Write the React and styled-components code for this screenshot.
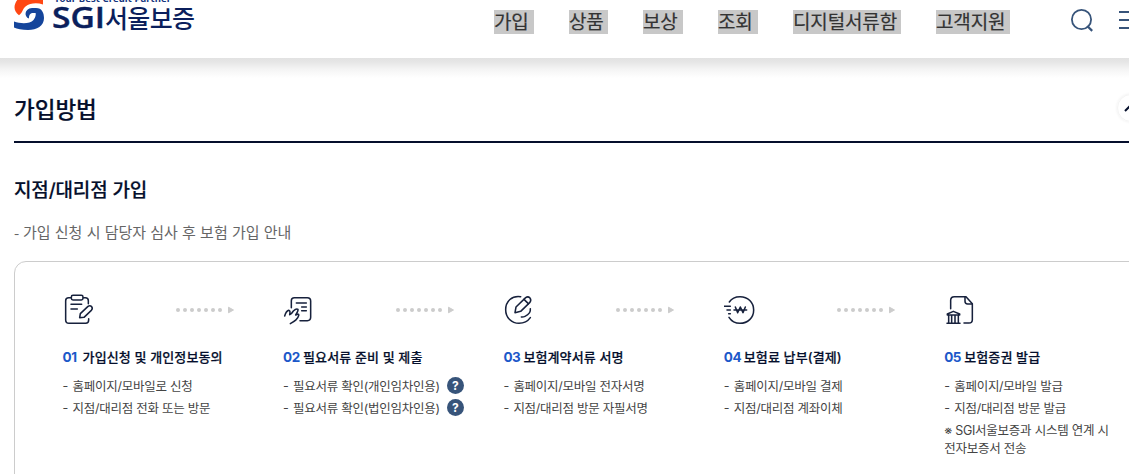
import React from 'react'
import styled, { createGlobalStyle } from 'styled-components'

const steps = [
  {
    no: '01',
    title: '가입신청 및 개인정보동의',
    icon: ClipboardIcon,
    items: [{ text: '홈페이지/모바일로 신청' }, { text: '지점/대리점 전화 또는 방문' }],
  },
  {
    no: '02',
    title: '필요서류 준비 및 제출',
    icon: SubmitIcon,
    items: [
      { text: '필요서류 확인(개인임차인용)', help: true },
      { text: '필요서류 확인(법인임차인용)', help: true },
    ],
  },
  {
    no: '03',
    title: '보험계약서류 서명',
    icon: SignIcon,
    items: [{ text: '홈페이지/모바일 전자서명' }, { text: '지점/대리점 방문 자필서명' }],
  },
  {
    no: '04',
    title: '보험료 납부(결제)',
    icon: PayIcon,
    items: [{ text: '홈페이지/모바일 결제' }, { text: '지점/대리점 계좌이체' }],
  },
  {
    no: '05',
    title: '보험증권 발급',
    icon: PolicyIcon,
    items: [{ text: '홈페이지/모바일 발급' }, { text: '지점/대리점 방문 발급' }],
    note: ['※ SGI서울보증과 시스템 연계 시', '전자보증서 전송'],
  },
]

const menus = [
  { label: '가입', width: 40 },
  { label: '상품', width: 39 },
  { label: '보상', width: 40 },
  { label: '조회', width: 40 },
  { label: '디지털서류함', width: 108 },
  { label: '고객지원', width: 74 },
]

function App() {
  return (
    <Page>
      <GlobalStyle />
      <Header>
        <Logo />
        <Nav>
          {menus.map((menu) => (
            <NavItem key={menu.label} $width={menu.width}>{menu.label}</NavItem>
          ))}
        </Nav>
        <Tools>
          <svg width="24" height="24" viewBox="0 0 24 24" fill="none" stroke="#37547a" strokeWidth="1.8">
            <circle cx="11.500" cy="10.5" r="9.6" />
            <path d="M17.2 17L22.2 21.9" strokeWidth="2.2" />
          </svg>
          <MenuButton>
            <span />
            <span />
            <span />
          </MenuButton>
        </Tools>
      </Header>
      <Shade />
      <Content>
        <TitleBar>
          <h2>가입방법</h2>
          <FoldButton>
            <svg width="14" height="8" viewBox="0 0 14 8" fill="none" stroke="#050f2c" strokeWidth="2">
              <path d="M1 7L7 1L13 7" />
            </svg>
          </FoldButton>
        </TitleBar>
        <SubTitle>지점/대리점 가입</SubTitle>
        <Desc><Dash>-</Dash>가입 신청 시 담당자 심사 후 보험 가입 안내</Desc>
        <Steps>
          {steps.map((step, i) => (
            <Step key={step.no}>
              <StepTop>
                <step.icon />
                {i < steps.length - 1 && <Arrow />}
              </StepTop>
              <StepTitle><em>{step.no}</em>{step.title}</StepTitle>
              {step.items.map((item) => (
                <StepItem key={item.text}>
                  <i>-</i>
                  {item.text}
                  {item.help && <Help>?</Help>}
                </StepItem>
              ))}
              {step.note && (
                <Note>
                  {step.note.map((line) => <div key={line}>{line}</div>)}
                </Note>
              )}
            </Step>
          ))}
        </Steps>
      </Content>
    </Page>
  )
}

export default App

function Logo() {
  return (
    <LogoSvg width="184" height="34" viewBox="0 0 184 34">
      <path fill="#ff4713" d="M5 15.3C-1 11 -1 4 5 -2H29V4.500C23 2.500 16 3 11.500 6.500C8.500 9 8.500 13 5 15.300Z" />
      <path fill="#15459b" d="M15 18.500C10 17 10 8.500 18 8H22C28 8 30 13 30 18C30 26 23 30 14 30C8 30 3 29 0 27.500V21.500C7 24 16 24 19.500 20C22 17 22 13 21.500 13H18C15 14 15 16.500 15 18.500Z" />
      <g fill="#0b1f5c" fontFamily="'Noto Sans','Noto Sans CJK KR',sans-serif">
        <text x="40" y="2" fontSize="9.500" fontWeight="700" fill="#15367f" textLength="117">Your Best Credit Partner</text>
        <text x="38" y="28" fontSize="29" fontWeight="600" stroke="#0b1f5c" strokeWidth="0.4" fontFamily="'Open Sans',sans-serif" textLength="53" lengthAdjust="spacingAndGlyphs">SGI</text>
        <text x="91" y="27.500" fontSize="25" fontWeight="500" fontFamily="'Noto Sans CJK KR',sans-serif" textLength="90">서울보증</text>
      </g>
    </LogoSvg>
  )
}

function Arrow() {
  return (
    <svg width="58" height="8" viewBox="0 0 58 8" fill="#ccc">
      {[0, 1, 2, 3, 4, 5, 6].map((n) => <circle key={n} cx={2 + n * 7} cy="4" r="2" />)}
      <path d="M52.500 1.200L57.500 4L52.500 6.800Z" stroke="#ccc" strokeLinejoin="round" />
    </svg>
  )
}

function ClipboardIcon() {
  return (
    <Icon viewBox="39 27 96 96">
      <path d="M62 38H56Q47 38 47 47V105Q47 115 57 115H107Q116 115 116 105V101" />
      <path d="M100 38H106Q115 38 115 47V56" />
      <rect x="64" y="31" width="35" height="14" rx="5" />
      <path d="M63 58H95M63 72H82" />
      <path d="M89 98L91 86L114 64Q120 60 125 65Q129 70 124 76L102 97Z" />
    </Icon>
  )
}

function SubmitIcon() {
  return (
    <Icon viewBox="39 27 96 96">
      <path d="M64 68V47Q64 38 73 38H112Q122 38 122 48V97Q122 107 112 107H90" />
      <path d="M79 54H109M95 66H109M95 77H109" />
      <path d="M44 93Q48 79 56 76Q62 76 59 89Q64 88 70 78Q79 69 84 73Q85 77 77 90Q88 84 86 92C83 104 74 109 61 116" />
    </Icon>
  )
}

function SignIcon() {
  return (
    <Icon viewBox="39 27 96 96">
      <path d="M92 35C66 31 47 49 47 74C47 98 65 115 87 115Q109 115 121 98" />
      <path d="M121 71Q123 86 105 94Q99 97 94 96" />
      <path d="M75 83L78 66L107 38Q114 33 120 39Q125 46 119 53L92 79Z" />
      <path d="M102 43L115 56" />
    </Icon>
  )
}

function PayIcon() {
  return (
    <Icon viewBox="27 27 96 96">
      <path d="M43 51C50 40 62 35 75 35C99 35 116 52 116 75C116 99 98 115 75 115C61 115 49 108 42 97" />
      <path d="M28 64H46M36 75H46M41 86H46" />
      <path d="M61 66L68 83L76 66L84 83L91 66M57 75H95" />
    </Icon>
  )
}

function PolicyIcon() {
  return (
    <Icon viewBox="42 27 96 96">
      <path d="M62 71V46Q62 35 73 35H108L127 56V104Q127 114 117 114H102" />
      <path d="M105 36V49Q105 57 113 57H126" />
      <path d="M52 90V87L70 79L89 87V90ZM51 115H90M56 92V113M65 92V113M75 92V113M85 92V113" />
    </Icon>
  )
}

const GlobalStyle = createGlobalStyle`
*{
box-sizing:border-box;
}
body{
margin:0;
background:#fff;
overflow:hidden;
font-family:Inter,'Noto Sans CJK KR',sans-serif;
}
h2,h3,h4,p{
margin:0;
}
`
const Page = styled.div`
width:1129px;
height:474px;
overflow:hidden;
background:#fff;
`
const Header = styled.header`
display:flex;
align-items:flex-start;
height:58px;
padding-left:14px;
background:#fff;
`
const LogoSvg = styled.svg`
flex:none;
overflow:hidden;
`
const Nav = styled.nav`
display:flex;
gap:35px;
margin:10px 0 0 296px;
`
const NavItem = styled.a`
flex:none;
width:${props => props.$width}px;
height:24px;
line-height:25px;
background:#c8c8c8;
color:#333;
font-size:19px;
letter-spacing:-0.15px;
-webkit-text-stroke:0.2px;
white-space:nowrap;
`
const Tools = styled.div`
display:flex;
gap:25px;
margin:9px 0 0 60px;
`
const MenuButton = styled.div`
display:flex;
flex-direction:column;
flex:none;
gap:6px;
width:24px;
padding-top:2px;
span{
  height:2px;
  background:#37547a;
}
`
const Shade = styled.div`
height:20px;
background:linear-gradient(#e2e2e2,#e6e6e6 20%,#f4f4f4 55%,#fff);
`
const Content = styled.main`
width:1131px;
margin-left:14px;
`
const TitleBar = styled.div`
display:flex;
justify-content:space-between;
height:65px;
padding-top:16px;
border-bottom:2px solid #050f2c;
h2{
  padding-top:1px;
  font-size:22.5px;
  font-weight:500;
  line-height:30px;
  color:#050f2c;
  -webkit-text-stroke:0.2px;
}
`
const FoldButton = styled.div`
display:flex;
align-items:center;
justify-content:center;
width:28px;
height:28px;
border-radius:50%;
border:1px solid #f4f4f4;
box-shadow:0 0 3px rgba(0,0,0,0.08);
`
const SubTitle = styled.h3`
margin-top:34px;
font-size:19px;
font-weight:500;
line-height:28px;
letter-spacing:-0.15px;
color:#050f2c;
-webkit-text-stroke:0.2px;
`
const Desc = styled.p`
display:flex;
margin-top:16px;
font-size:15px;
line-height:24px;
color:#666;
`
const Dash = styled.span`
width:9px;
font-family:'Noto Sans CJK KR',sans-serif;
`
const Steps = styled.div`
display:grid;
grid-template-columns:repeat(5,220.4px);
width:1200px;
height:260px;
margin-top:16px;
padding:32px 0 0 47.600px;
border:1px solid #ccc;
border-radius:12px;
`
const Step = styled.div`
white-space:nowrap;
`
const StepTop = styled.div`
display:flex;
align-items:center;
gap:81px;
height:32px;
`
const Icon = styled.svg`
flex:none;
width:32px;
height:32px;
fill:none;
stroke:#17213c;
stroke-width:4.6;
stroke-linecap:round;
stroke-linejoin:round;
`
const StepTitle = styled.h4`
display:flex;
margin-top:20px;
font-size:13px;
font-weight:500;
line-height:22px;
letter-spacing:0.12px;
color:#050f2c;
-webkit-text-stroke:0.2px;
em{
  width:20px;
  font-size:13.5px;
  font-style:normal;
  font-weight:700;
  letter-spacing:-0.4px;
  color:#1c58c9;
  -webkit-text-stroke:0;
}
`
const StepItem = styled.div`
display:flex;
align-items:center;
height:22px;
font-size:12.5px;
letter-spacing:-0.26px;
color:#444;
&:nth-of-type(2){
  margin-top:6px;
}
i{
  width:10px;
  font-style:normal;
}
`
const Help = styled.span`
width:17px;
height:17px;
margin:1px 0 0 7px;
border-radius:50%;
background:#37547a;
color:#fff;
font-size:12px;
font-weight:700;
line-height:17px;
letter-spacing:0;
text-align:center;
`
const Note = styled.div`
margin-top:4px;
font-size:12.5px;
line-height:18px;
letter-spacing:-0.25px;
color:#444;
`
